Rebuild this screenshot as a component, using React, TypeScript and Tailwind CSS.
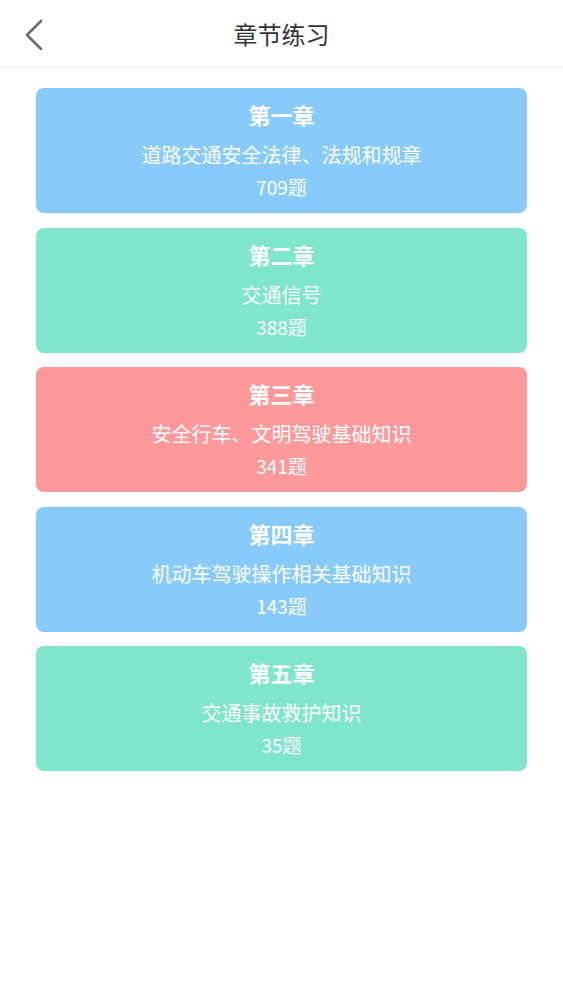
const chapters = [
  {title: '第一章', name: '道路交通安全法律、法规和规章', count: 709, color: 'bg-[#88cafa]'},
  {title: '第二章', name: '交通信号', count: 388, color: 'bg-[#7fe5cb]'},
  {title: '第三章', name: '安全行车、文明驾驶基础知识', count: 341, color: 'bg-[#fd999a]'},
  {title: '第四章', name: '机动车驾驶操作相关基础知识', count: 143, color: 'bg-[#88cafa]'},
  {title: '第五章', name: '交通事故救护知识', count: 35, color: 'bg-[#7fe5cb]'},
];

export default function App() {
  return (
    <div
      className="min-h-[1000px] w-[563px] bg-white"
      style={{fontFamily: '"Noto Sans CJK SC", "Noto Sans", Roboto, sans-serif'}}
    >
      <header className="relative flex h-[68px] items-center justify-center border-b border-[#ebebeb]">
        <button className="absolute left-[22px] top-[18px] text-[#666]">
          <svg width="24" height="32" viewBox="0 0 24 32" fill="none">
            <path d="M19 3 L5 17 L19 31" stroke="#6b6b6b" strokeWidth="2.6" strokeLinecap="round" strokeLinejoin="round" />
          </svg>
        </button>
        <h1 className="text-[24px] text-[#333]">章节练习</h1>
      </header>

      <div className="flex flex-col gap-[14.5px] px-[36px] pt-[20px]">
        {chapters.map((c) => (
          <div
            key={c.title}
            className={`flex h-[125px] flex-col items-center rounded-[8px] pt-[11px] text-white ${c.color}`}
          >
            <div className="text-[22px] font-bold leading-[30px]">{c.title}</div>
            <div className="mt-[12px] text-[20px] leading-[28px]">{c.name}</div>
            <div className="mt-[5px] text-[19px] leading-[26px]">{c.count}题</div>
          </div>
        ))}
      </div>
    </div>
  );
}
